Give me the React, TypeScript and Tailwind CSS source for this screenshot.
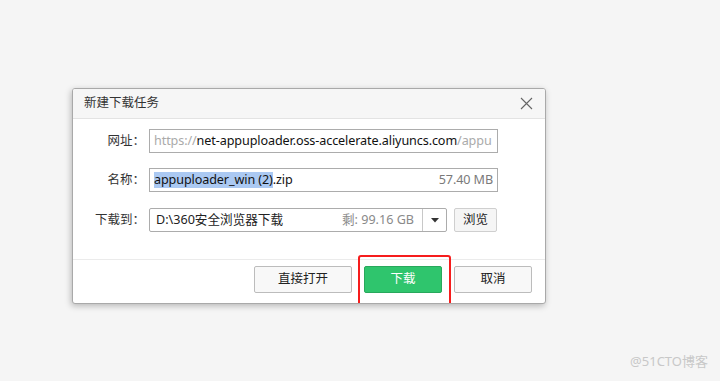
import React from "react";

const font = { fontFamily: '"Noto Sans", "Noto Sans CJK SC", sans-serif' };

function Label({ children }: { children: React.ReactNode }) {
  return (
    <div className="w-[72px] text-right text-[12.5px] leading-none text-[#333]">{children}</div>
  );
}

export default function App() {
  return (
    <div className="w-[720px] h-[381px] bg-[#f5f5f5] relative overflow-hidden" style={font}>
      <div className="pt-[88px] pl-[72px]">
        <div className="w-[474px] h-[216px] bg-white border border-[#a9a9a9] rounded-[3px] shadow-[-1px_2px_6px_rgba(0,0,0,0.25)] flex flex-col overflow-hidden">
          {/* header */}
          <div className="h-[30px] bg-[#f6f6f6] border-b border-[#e3e3e3] flex items-center justify-between pl-[11px] pr-[12px] shrink-0">
            <span className="text-[12.5px] text-[#333] leading-none">新建下载任务</span>
            <svg width="13" height="13" viewBox="0 0 13 13">
              <path d="M1 1 L12 12 M12 1 L1 12" stroke="#666" strokeWidth="1.1" fill="none" />
            </svg>
          </div>
          {/* body */}
          <div className="flex flex-col pt-[10px] gap-[15px]">
            <div className="flex items-center gap-[4px]">
              <Label>网址：</Label>
              <div className="w-[349px] h-[24px] border border-[#acacac] flex items-center pl-[4px] overflow-hidden whitespace-nowrap text-[12.6px] tracking-[-0.1px]">
                <span className="text-[#aaa]">https://</span>
                <span className="text-[#111]">net-appuploader.oss-accelerate.aliyuncs.com</span>
                <span className="text-[#aaa]">/appu</span>
              </div>
            </div>
            <div className="flex items-center gap-[4px]">
              <Label>名称：</Label>
              <div className="w-[349px] h-[24px] border border-[#acacac] flex items-center pl-[4px] pr-[4px] whitespace-nowrap text-[12.6px] tracking-[-0.1px]">
                <span className="bg-[#abc9f2] text-[#111] leading-[16px]">appuploader_win (2)</span>
                <span className="text-[#111]">.zip</span>
                <span className="ml-auto text-[#7a7a7a]">57.40 MB</span>
              </div>
            </div>
            <div className="flex items-center gap-[4px] mt-[1px]">
              <Label>下载到：</Label>
              <div className="w-[298px] h-[24px] border border-[#acacac] rounded-[2px] flex items-center whitespace-nowrap text-[12.6px]">
                <span className="pl-[6px] text-[#222]">D:\360安全浏览器下载</span>
                <span className="ml-auto pr-[8px] text-[#8a8a8a]">剩: 99.16 GB</span>
                <div className="w-[24px] h-full border-l border-[#c8c8c8] flex items-center justify-center">
                  <svg width="8" height="5" viewBox="0 0 8 5">
                    <path d="M0 0 L8 0 L4 4.5 Z" fill="#333" />
                  </svg>
                </div>
              </div>
              <div className="ml-[3px] w-[43px] h-[24px] border border-[#cfcfcf] rounded-[2px] bg-[#f5f5f5] flex items-center justify-center text-[12.5px] text-[#222]">
                浏览
              </div>
            </div>
          </div>
          {/* footer */}
          <div className="mt-auto border-t border-[#ebebeb] h-[44px] flex items-start justify-end pr-[13px] pt-[6px] gap-[12px]">
            <div className="w-[98px] h-[27px] border border-[#bcbcbc] rounded-[2px] bg-[#f8f8f8] flex items-center justify-center text-[12.5px] text-[#222]">
              直接打开
            </div>
            <div className="relative w-[78px] h-[27px] border border-[#28a85c] rounded-[2px] bg-[#2fc56d] flex items-center justify-center text-[12.5px] text-white">
              下载
              <div className="absolute left-[-7px] top-[-12px] w-[93px] h-[52px] border-[2px] border-[#f61d1d] rounded-[3px]" />
            </div>
            <div className="w-[78px] h-[27px] border border-[#bcbcbc] rounded-[2px] bg-[#f8f8f8] flex items-center justify-center text-[12.5px] text-[#222]">
              取消
            </div>
          </div>
        </div>
      </div>
      <div className="absolute right-[12px] bottom-[13px] text-[13px] text-[#c8c8c8] leading-none">@51CTO博客</div>
    </div>
  );
}
